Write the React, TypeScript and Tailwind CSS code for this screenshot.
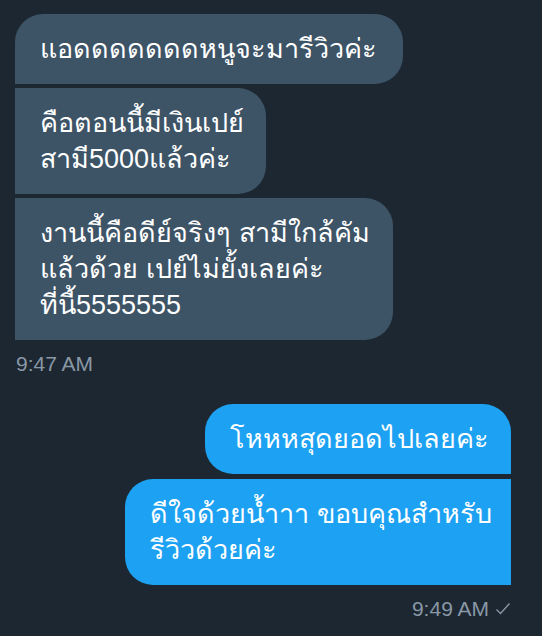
import React from "react";

const received = [
  { lines: ["แอดดดดดดดหนูจะมารีวิวค่ะ"], cls: "w-[388px] rounded-tl-[28px]" },
  { lines: ["คือตอนนี้มีเงินเปย์", "สามี5000แล้วค่ะ"], cls: "w-[251px]" },
  { lines: ["งานนี้คือดีย์จริงๆ สามีใกล้คัม", "แล้วด้วย เปย์ไม่ยั้งเลยค่ะ", "ที่นี้5555555"], cls: "w-[378px]" },
];

const sent = [
  { lines: ["โหหหสุดยอดไปเลยค่ะ"], cls: "w-[306px] rounded-tr-[28px]" },
  { lines: ["ดีใจด้วยน้ำาา ขอบคุณสำหรับ", "รีวิวด้วยค่ะ"], cls: "w-[386px]" },
];

const Bubble = ({ lines, className }: { lines: string[]; className: string }) => (
  <div className={`pl-[25px] pr-[18px] py-[17px] text-[27px] leading-[36px] text-white whitespace-nowrap ${className}`}>
    {lines.map((line, i) => (
      <div key={i}>{line}</div>
    ))}
  </div>
);

export default function App() {
  return (
    <div className="w-[542px] h-[636px] bg-[#1c2732] pt-[14px] pl-[15px] pr-[31px] font-['Liberation_Sans',sans-serif] overflow-hidden">
      {/* incoming */}
      <div className="flex flex-col items-start gap-[4px]">
        {received.map((m, i) => (
          <Bubble key={i} lines={m.lines} className={`bg-[#3d5366] rounded-r-[28px] ${m.cls}`} />
        ))}
      </div>
      <div className="mt-[12px] pl-[1px] text-[21px] leading-[24px] text-[#8a98a5]">9:47 AM</div>

      {/* outgoing */}
      <div className="mt-[28px] flex flex-col items-end gap-[5px]">
        {sent.map((m, i) => (
          <Bubble key={i} lines={m.lines} className={`bg-[#1da1f2] rounded-l-[28px] ${m.cls}`} />
        ))}
      </div>
      <div className="mt-[12px] flex justify-end items-center gap-[6px] text-[21px] leading-[24px] text-[#8a98a5]">
        <span>9:49 AM</span>
        <svg width="16" height="14" viewBox="0 0 16 14" fill="none" stroke="#8a98a5" strokeWidth="1.3">
          <path d="M1.5 7.5 L5.5 11.5 L14.5 1.5" />
        </svg>
      </div>
    </div>
  );
}
